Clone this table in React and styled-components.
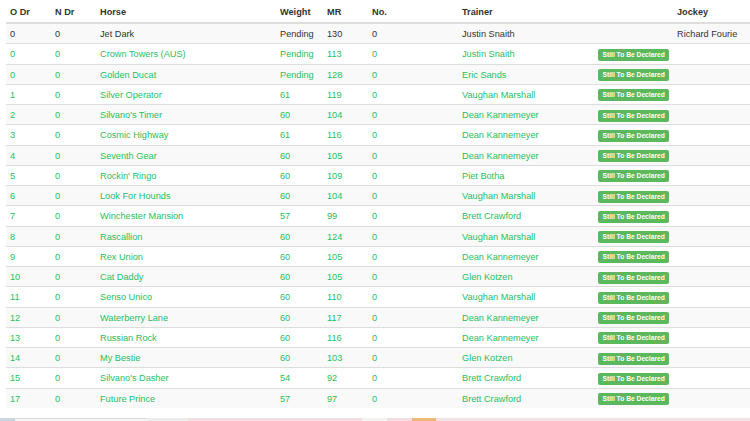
import React from "react";
import styled, { createGlobalStyle } from "styled-components";

const Global = createGlobalStyle`
  html, body {
    margin: 0;
    padding: 0;
    background: #fff;
    overflow: hidden;
  }
  body {
    font-family: "Liberation Sans", Arial, sans-serif;
    color: #333;
  }
`;

const Page = styled.div`
  width: 750px;
  height: 421px;
  overflow: hidden;
  padding-left: 6px;
  box-sizing: border-box;
`;

const Table = styled.table`
  width: 744px;
  table-layout: fixed;
  border-collapse: collapse;
  border-spacing: 0;
  font-size: 9.2px;
`;

const Th = styled.th`
  text-align: left;
  font-weight: bold;
  color: #333;
  padding: 5px 4px 3px;
  line-height: 14px;
  border-bottom: 2px solid #ddd;
  white-space: nowrap;
`;

const Tr = styled.tr`
  background: ${(p) => (p.$striped ? "#f9f9f9" : "#fff")};
  color: ${(p) => (p.$green ? "#1fc060" : "#333")};
`;

const Td = styled.td`
  padding: 3px 4px 1px;
  line-height: 15.25px;
  border-top: 1px solid #ddd;
  white-space: nowrap;
  vertical-align: middle;
`;

const Badge = styled.span`
  display: inline-block;
  background: #5cb85c;
  color: #fff;
  font-size: 6.7px;
  font-weight: bold;
  line-height: 12px;
  padding: 0 4.5px;
  border-radius: 2px;
  vertical-align: middle;
`;

const Footer = styled.div`
  display: flex;
  margin-top: 10px;
  margin-left: -6px;
  height: 20px;
`;

const Segment = styled.div`
  height: 100%;
  background: ${(p) => p.$bg};
  border-top: 1px solid ${(p) => p.$line || p.$bg};
`;

const cols = [45, 45, 180, 47, 45, 90, 136, 79, 77];

const rows = [
  ["0", "0", "Jet Dark", "Pending", "130", "0", "Justin Snaith", false, "Richard Fourie"],
  ["0", "0", "Crown Towers (AUS)", "Pending", "113", "0", "Justin Snaith", true],
  ["0", "0", "Golden Ducat", "Pending", "128", "0", "Eric Sands", true],
  ["1", "0", "Silver Operator", "61", "119", "0", "Vaughan Marshall", true],
  ["2", "0", "Silvano's Timer", "60", "104", "0", "Dean Kannemeyer", true],
  ["3", "0", "Cosmic Highway", "61", "116", "0", "Dean Kannemeyer", true],
  ["4", "0", "Seventh Gear", "60", "105", "0", "Dean Kannemeyer", true],
  ["5", "0", "Rockin' Ringo", "60", "109", "0", "Piet Botha", true],
  ["6", "0", "Look For Hounds", "60", "104", "0", "Vaughan Marshall", true],
  ["7", "0", "Winchester Mansion", "57", "99", "0", "Brett Crawford", true],
  ["8", "0", "Rascallion", "60", "124", "0", "Vaughan Marshall", true],
  ["9", "0", "Rex Union", "60", "105", "0", "Dean Kannemeyer", true],
  ["10", "0", "Cat Daddy", "60", "105", "0", "Glen Kotzen", true],
  ["11", "0", "Senso Unico", "60", "110", "0", "Vaughan Marshall", true],
  ["12", "0", "Waterberry Lane", "60", "117", "0", "Dean Kannemeyer", true],
  ["13", "0", "Russian Rock", "60", "116", "0", "Dean Kannemeyer", true],
  ["14", "0", "My Bestie", "60", "103", "0", "Glen Kotzen", true],
  ["15", "0", "Silvano's Dasher", "54", "92", "0", "Brett Crawford", true],
  ["17", "0", "Future Prince", "57", "97", "0", "Brett Crawford", true],
];

const segments = [
  [15, "#cdd6de"],
  [133, "#f5f5f5", "#dcdcdc"],
  [40, "#ececec"],
  [174, "#f2dede"],
  [25, "#f7f2f2"],
  [25, "#f2dede"],
  [24, "#f3b67a"],
  [314, "#f2e2e2"],
];

export default function App() {
  return (
    <Page>
      <Global />
      <Table>
        <colgroup>
          {cols.map((w, i) => (
            <col key={i} style={{ width: w }} />
          ))}
        </colgroup>
        <thead>
          <tr>
            <Th>O Dr</Th>
            <Th>N Dr</Th>
            <Th>Horse</Th>
            <Th>Weight</Th>
            <Th>MR</Th>
            <Th>No.</Th>
            <Th>Trainer</Th>
            <Th></Th>
            <Th>Jockey</Th>
          </tr>
        </thead>
        <tbody>
          {rows.map((r, i) => (
            <Tr key={i} $striped={i % 2 === 0} $green={r[7]}>
              <Td>{r[0]}</Td>
              <Td>{r[1]}</Td>
              <Td>{r[2]}</Td>
              <Td>{r[3]}</Td>
              <Td>{r[4]}</Td>
              <Td>{r[5]}</Td>
              <Td>{r[6]}</Td>
              <Td>{r[7] && <Badge>Still To Be Declared</Badge>}</Td>
              <Td>{r[8] || ""}</Td>
            </Tr>
          ))}
        </tbody>
      </Table>
      <Footer>
        {segments.map(([w, bg, line], i) => (
          <Segment key={i} $bg={bg} $line={line} style={{ width: w }} />
        ))}
      </Footer>
    </Page>
  );
}
